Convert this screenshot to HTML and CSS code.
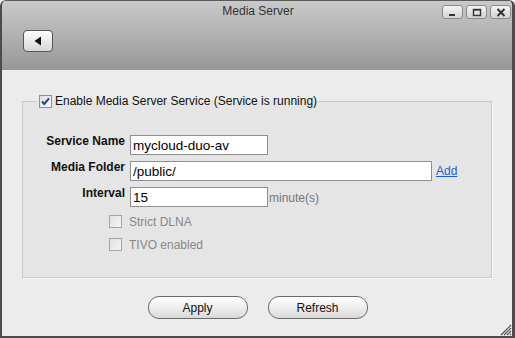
FILE: index.html
```html
<!DOCTYPE html>
<html lang="en">

<head>
    <meta charset="UTF-8">
    <title>Media Server</title>
    <link rel="stylesheet" href="styles.css">
</head>

<body>
    <div class="window">
        <div class="header">
            <div class="titlebar">
                <span class="title">Media Server</span>
                <div class="controls">
                    <span class="ctl">
                        <svg width="9" height="9" viewBox="0 0 9 9"><rect x="1" y="6" width="6" height="2" fill="#333"/></svg>
                    </span>
                    <span class="ctl">
                        <svg width="10" height="9" viewBox="0 0 10 9"><rect x="1.5" y="1.5" width="7" height="6" fill="none" stroke="#333" stroke-width="1.4"/><rect x="1" y="1" width="8" height="1.6" fill="#333"/></svg>
                    </span>
                    <span class="ctl">
                        <svg width="10" height="9" viewBox="0 0 10 9"><path d="M1.5 1 L8.5 8 M8.5 1 L1.5 8" stroke="#333" stroke-width="2"/></svg>
                    </span>
                </div>
            </div>
            <div class="toolbar">
                <button class="back">
                    <svg width="8" height="10" viewBox="0 0 8 10"><path d="M7 0.5 L7 9.5 L0.5 5 Z" fill="#111"/></svg>
                </button>
            </div>
        </div>

        <div class="content">
            <fieldset class="group">
                <legend>
                    <span class="check checked">
                        <svg width="11" height="11" viewBox="0 0 11 11"><path d="M2 5.5 L4.3 8 L9 2.3" fill="none" stroke="#2a3f8f" stroke-width="2"/></svg>
                    </span>
                    Enable Media Server Service (Service is running)
                </legend>

                <div class="form">
                    <label>Service Name</label>
                    <div class="field"><input class="short" type="text" value="mycloud-duo-av"></div>

                    <label>Media Folder</label>
                    <div class="field"><input class="long" type="text" value="/public/"><a href="#" class="add">Add</a></div>

                    <label>Interval</label>
                    <div class="field"><input class="short" type="text" value="15"><span class="unit">minute(s)</span></div>
                </div>

                <div class="options">
                    <div class="option"><span class="check disabled"></span>Strict DLNA</div>
                    <div class="option"><span class="check disabled"></span>TIVO enabled</div>
                </div>
            </fieldset>

            <div class="actions">
                <button class="pill">Apply</button>
                <button class="pill">Refresh</button>
            </div>
        </div>

        <svg class="grip" width="13" height="13" viewBox="0 0 13 13">
            <path d="M12 2 L2 12 M12 5 L5 12 M12 8 L8 12 M12 11 L11 12" stroke="#555" stroke-width="1.2"/>
        </svg>
    </div>
</body>

</html>
```

FILE: styles.css
```css
body {
    margin: 0;
    font-family: "Liberation Sans", Arial, sans-serif;
    font-size: 12px;
    background: #fff;
}

.window {
    position: relative;
    width: 515px;
    height: 338px;
    box-sizing: border-box;
    border: 2px solid #4c4c4c;
    border-top: 1px solid #5a5a5a;
    border-right-width: 3px;
    border-radius: 6px 6px 0 0;
    background: #ececec;
    display: flex;
    flex-direction: column;
    overflow: hidden;
}

.header {
    height: 69px;
    background: linear-gradient(#c9c9c9, #b3b3b3 45%, #979797);
    display: flex;
    flex-direction: column;
}

.titlebar {
    height: 21px;
    display: grid;
    grid-template-columns: 1fr auto 1fr;
    align-items: start;
}

.title {
    grid-column: 2;
    color: #333;
    line-height: 14px;
    padding-top: 3px;
    padding-left: 2px;
}

.controls {
    grid-column: 3;
    justify-self: end;
    display: flex;
    gap: 3px;
    padding-top: 4px;
    padding-right: 1px;
}

.ctl {
    width: 21px;
    height: 14px;
    box-sizing: border-box;
    border: 1px solid #8a8a8a;
    border-radius: 3px;
    background: linear-gradient(#f4f4f4, #d2d2d2);
    display: flex;
    align-items: center;
    justify-content: center;
}

.toolbar {
    padding: 8px 0 0 21px;
}

.back {
    width: 30px;
    height: 22px;
    padding: 0;
    border: 1px solid #555;
    border-radius: 4px;
    background: linear-gradient(#fdfdfd, #e6e6e6 60%, #d6d6d6);
    display: flex;
    align-items: center;
    justify-content: center;
}

.content {
    flex: 1;
    display: flex;
    flex-direction: column;
}

.group {
    margin: 24px 20px 0 20px;
    padding: 0 0 26px 0;
    border: 1px solid #c9c9c9;
    box-shadow: 1px 1px 0 #f8f8f8;
    background: #e5e5e5;
    min-width: 0;
}

.group legend {
    margin-left: 14px;
    padding: 0 2px;
    color: #111;
    line-height: 14px;
    display: flex;
    align-items: center;
    gap: 3px;
}

.check {
    width: 13px;
    height: 13px;
    box-sizing: border-box;
    border: 1px solid #8f8f8f;
    background: linear-gradient(135deg, #dcdcdc, #fafafa);
    display: inline-flex;
    align-items: center;
    justify-content: center;
}

.check.disabled {
    border-color: #a5a5a5;
    background: linear-gradient(135deg, #e2e2e2, #f4f4f4);
}

.form {
    margin-top: 27px;
    display: grid;
    grid-template-columns: 102px auto;
    column-gap: 5px;
    row-gap: 6px;
    align-items: start;
}

.form label {
    text-align: right;
    font-weight: bold;
    color: #111;
    line-height: 12px;
    padding-top: 0;
}

.field {
    display: flex;
    align-items: center;
    gap: 4px;
}

.field input {
    height: 20px;
    box-sizing: border-box;
    border: 1px solid #8e8e8e;
    background: #fff;
    padding: 1px 2px 0;
    font-family: "Liberation Sans", Arial, sans-serif;
    font-size: 13.5px;
    color: #000;
    outline: none;
}

.short {
    width: 138px;
}

.long {
    width: 302px;
}

.add {
    color: #1f5fd6;
    text-decoration: underline;
}

.unit {
    color: #777;
    margin-left: -3px;
    padding-top: 2px;
}

.options {
    margin-top: 8px;
    padding-left: 86px;
    display: flex;
    flex-direction: column;
    gap: 10px;
}

.option {
    display: flex;
    align-items: center;
    gap: 7px;
    height: 13px;
    color: #888;
}

.actions {
    margin-top: 18px;
    display: flex;
    justify-content: center;
    gap: 20px;
    padding-left: 1px;
}

.pill {
    width: 100px;
    height: 23px;
    border: 1px solid #6b6b6b;
    border-radius: 11px;
    background: linear-gradient(#ffffff, #eeeeee 50%, #d8d8d8);
    box-shadow: inset 0 1px 0 #fff;
    font-family: "Liberation Sans", Arial, sans-serif;
    font-size: 12px;
    color: #111;
    padding: 0;
}

.grip {
    position: absolute;
    right: 0;
    bottom: 0;
}
```
